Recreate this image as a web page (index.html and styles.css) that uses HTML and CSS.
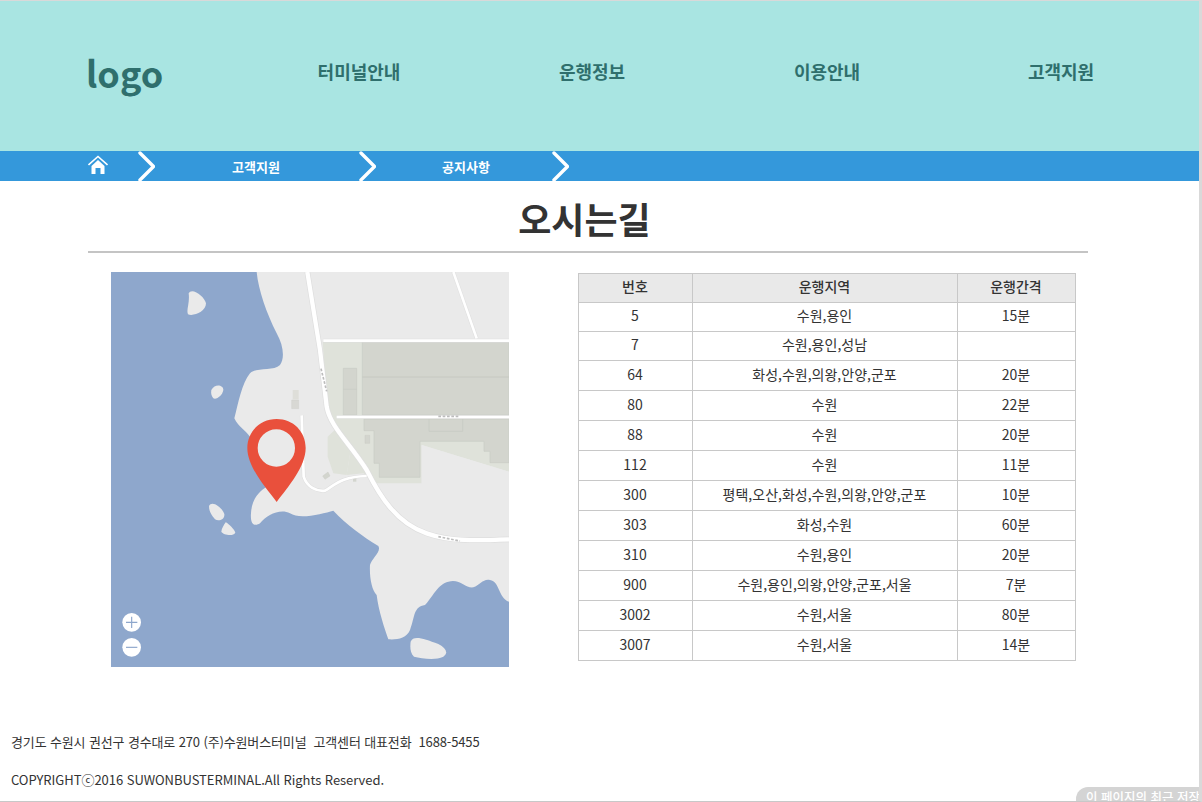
FILE: index.html
```html
<!DOCTYPE html>
<html lang="ko">
  <head>
    <meta charset="UTF-8" />
    <meta name="viewport" content="width=device-width, initial-scale=1.0" />
    <title>오시는길</title>
    <link rel="stylesheet" href="styles.css">
  </head>
  <body>
    <div class="page">
      <header class="top">
        <div class="logo">logo</div>
        <nav class="menu">
          <a>터미널안내</a>
          <a>운행정보</a>
          <a>이용안내</a>
          <a>고객지원</a>
        </nav>
      </header>

      <div class="crumbs">
        <svg class="home" width="20" height="20" viewBox="0 0 20 20">
          <path d="M0.5 10 L10 1.5 L19.5 10" fill="none" stroke="#fff" stroke-width="1.6"/>
          <path d="M3.5 11 L10 5 L16.5 11 V19 H12.5 V13 H7.5 V19 H3.5 Z" fill="#fff"/>
        </svg>
        <svg class="arrow" width="18" height="30" viewBox="0 0 18 30"><path d="M3 2 L16.5 15.5 L3 29" fill="none" stroke="#fff" stroke-width="3.4" stroke-linecap="round" stroke-linejoin="round"/></svg>
        <span class="crumb crumb-a">고객지원</span>
        <svg class="arrow" width="18" height="30" viewBox="0 0 18 30"><path d="M3 2 L16.5 15.5 L3 29" fill="none" stroke="#fff" stroke-width="3.4" stroke-linecap="round" stroke-linejoin="round"/></svg>
        <span class="crumb crumb-b">공지사항</span>
        <svg class="arrow" width="18" height="30" viewBox="0 0 18 30"><path d="M3 2 L16.5 15.5 L3 29" fill="none" stroke="#fff" stroke-width="3.4" stroke-linecap="round" stroke-linejoin="round"/></svg>
      </div>

      <h1 class="title">오시는길</h1>

      <main class="content">
        <svg class="map" width="398" height="395" viewBox="3 6 1194 1185">
          <rect x="3" y="6" width="1194" height="1185" fill="#8ea7cc"/>
          <g class="soft">
            <!-- land -->
            <path fill="#eaeaea" d="M440 6 C445 60 470 130 500 190 C520 225 525 265 510 285 C490 305 440 290 420 310 C395 340 385 400 373 445 C385 470 405 480 420 500 L470 650 C445 665 425 690 423 730 C420 765 435 770 450 760 C470 735 510 715 540 730 C570 750 640 730 670 722 C710 765 760 800 805 828 C815 845 785 865 780 885 C778 920 785 960 800 975 C805 1020 825 1080 835 1108 C860 1110 890 1105 900 1080 C915 1040 910 1010 945 1005 C965 985 985 940 1015 935 C1050 925 1065 955 1090 952 C1110 945 1120 925 1140 930 C1170 935 1165 985 1197 995 L1197 6 Z"/>
            <!-- islands -->
            <path fill="#eaeaea" d="M236 70 C245 50 285 80 288 100 C288 125 250 140 234 133 C228 120 240 100 236 70 Z"/>
            <path fill="#eaeaea" d="M304 360 C315 340 340 345 340 360 C338 375 320 390 310 385 C305 380 302 370 304 360 Z"/>
            <path fill="#eaeaea" d="M297 708 C305 690 335 710 343 732 C345 750 325 755 315 748 C305 735 297 725 297 708 Z"/>
            <path fill="#eaeaea" d="M347 757 C355 760 375 780 376 788 C370 800 340 795 334 785 C335 775 342 765 347 757 Z"/>
            <path fill="#eaeaea" d="M902 1115 C910 1095 940 1105 985 1122 C1010 1135 1015 1150 1000 1160 C975 1172 935 1165 912 1160 C900 1150 900 1130 902 1115 Z"/>
            <!-- factory area -->
            <path fill="#dfe2da" d="M638 215 H1197 V605 L935 525 V640 H800 L760 610 L710 615 L722 540 L680 475 L650 400 Z"/>
            <path fill="#dfe2da" d="M653 500 L680 475 L722 540 L710 615 L670 610 L653 560 Z"/>
            <path fill="#d3d5ce" stroke="#c9cbc4" stroke-width="2" d="M757 215 H1197 V435 H757 Z"/>
            <path fill="none" stroke="#c6c8c1" stroke-width="3" d="M757 321 H1197"/>
            <path fill="#d3d5ce" stroke="#c9cbc4" stroke-width="2" d="M700 295 H740 V435 H700 Z M700 358 H740"/>
            <path fill="#d3d5ce" stroke="#c9cbc4" stroke-width="2" d="M762 447 H1197 V578 H1140 V544 H1122 V514 H930 V622 H808 V580 H792 V482 H762 Z"/>
            <path fill="none" stroke="#c6c8c1" stroke-width="2" d="M957 447 V484 H1058 V447"/>
            <path fill="#eaeaea" d="M935 525 L1197 605 V640 H935 Z"/>
            <path fill="#d3d5ce" stroke="#c4c6bf" d="M765 496 H779 V520 H765 Z"/>
            <path fill="#d3d5ce" stroke="#c4c6bf" d="M638 618 L654 606 L660 618 L645 628 Z"/>
            <path fill="#deded9" d="M548 360 H566 V388 H548 Z"/>
            <path fill="#d8d8d4" stroke="#c8c8c4" d="M545 390 H566 V416 H545 Z"/>
            <path fill="#d3d5ce" d="M729 622 H739 V635 H729 Z"/>
            <!-- roads, casing then fill -->
            <g fill="none" stroke="#dedede" stroke-width="17">
              <path d="M592 6 L630 240 L650 410 C660 470 720 520 770 600 C810 680 860 760 950 790 C1020 815 1100 812 1197 808"/>
            </g>
            <g fill="none" stroke="#dedede" stroke-width="11">
              <path d="M640 212 H1197"/>
              <path d="M680 441 H1197"/>
              <path d="M1030 6 L1100 205"/>
              <path d="M575 436 L581 620 C590 650 620 665 645 662 C680 640 700 620 770 618"/>
            </g>
            <g fill="none" stroke="#fff" stroke-width="13">
              <path d="M592 6 L630 240 L650 410 C660 470 720 520 770 600 C810 680 860 760 950 790 C1020 815 1100 812 1197 808"/>
            </g>
            <g fill="none" stroke="#fff" stroke-width="8">
              <path d="M640 212 H1197"/>
              <path d="M680 441 H1197"/>
              <path d="M1030 6 L1100 205"/>
              <path d="M575 436 L581 620 C590 650 620 665 645 662 C680 640 700 620 770 618"/>
            </g>
            <!-- road name marks -->
            <g fill="none" stroke="#bcbcbc" stroke-width="5" stroke-dasharray="8 5">
              <path d="M633 296 L650 364"/>
              <path d="M985 439 H1050"/>
              <path d="M985 800 L1050 813"/>
            </g>
          </g>
          <!-- pin -->
          <path fill="#e9503c" fill-rule="evenodd" d="M500 447 C550 447 587 485 587 534 C587 590 535 650 500 696 C465 650 412 590 412 534 C412 485 450 447 500 447 Z M499 478 A56 56 0 1 0 499 590 A56 56 0 1 0 499 478 Z"/>
          <!-- zoom buttons -->
          <circle cx="65" cy="1057" r="28" fill="#fff"/>
          <path d="M48 1057 H82 M65 1040 V1074" stroke="#8ea7cc" stroke-width="3.5" fill="none"/>
          <circle cx="65" cy="1132" r="28" fill="#fff"/>
          <path d="M48 1132 H82" stroke="#8ea7cc" stroke-width="3.5" fill="none"/>
        </svg>

        <table class="bus">
          <thead>
            <tr><th class="c1">번호</th><th class="c2">운행지역</th><th class="c3">운행간격</th></tr>
          </thead>
          <tbody>
            <tr><td>5</td><td>수원,용인</td><td>15분</td></tr>
            <tr><td>7</td><td>수원,용인,성남</td><td></td></tr>
            <tr><td>64</td><td>화성,수원,의왕,안양,군포</td><td>20분</td></tr>
            <tr><td>80</td><td>수원</td><td>22분</td></tr>
            <tr><td>88</td><td>수원</td><td>20분</td></tr>
            <tr><td>112</td><td>수원</td><td>11분</td></tr>
            <tr><td>300</td><td>평택,오산,화성,수원,의왕,안양,군포</td><td>10분</td></tr>
            <tr><td>303</td><td>화성,수원</td><td>60분</td></tr>
            <tr><td>310</td><td>수원,용인</td><td>20분</td></tr>
            <tr><td>900</td><td>수원,용인,의왕,안양,군포,서울</td><td>7분</td></tr>
            <tr><td>3002</td><td>수원,서울</td><td>80분</td></tr>
            <tr><td>3007</td><td>수원,서울</td><td>14분</td></tr>
          </tbody>
        </table>
      </main>

      <footer class="foot">
        <p class="addr">경기도 수원시 권선구 경수대로 270 (주)수원버스터미널&nbsp; 고객센터 대표전화&nbsp; 1688-5455</p>
        <p class="copy">COPYRIGHTⓒ2016 SUWONBUSTERMINAL.All Rights Reserved.</p>
      </footer>

      <div class="saved">이 페이지의 최근 저장시</div>
    </div>
  </body>
</html>
```

FILE: styles.css
```css
html, body {
  margin: 0;
  height: 100%;
  overflow: hidden;
}
body {
  font-family: "Noto Sans CJK KR", "Noto Sans", sans-serif;
  background-color: #fff;
  color: #333;
}
.page {
  position: relative;
  box-sizing: border-box;
  height: 802px;
  overflow: hidden;
  border-top: 1px solid #d9d9d9;
  border-right: 3px solid #d9d9d9;
  border-bottom: 1px solid #c8c8c8;
}
.top {
  display: flex;
  align-items: center;
  height: 150px;
  padding-left: 86px;
  background-color: #a9e5e2;
  color: #2f6f6d;
  box-sizing: border-box;
}
.logo {
  width: 156px;
  font-size: 36px;
  font-weight: 700;
  line-height: 50px;
  margin-top: -8px;
}
.menu {
  display: grid;
  grid-template-columns: repeat(4, 234px);
  margin-top: -10px;
}
.menu a {
  text-align: center;
  font-size: 18px;
  font-weight: 700;
}
.menu a:nth-child(2) {
  padding-right: 2px;
}
.crumbs {
  display: flex;
  align-items: center;
  height: 30px;
  padding-left: 88px;
  background-color: #3498db;
  color: #fff;
}
.home {
  margin-right: 29px;
  margin-top: -2px;
}
.arrow {
  flex: none;
}
.crumb {
  text-align: center;
  font-size: 13px;
  font-weight: 700;
  box-sizing: border-box;
}
.crumb-a {
  width: 203px;
  padding-right: 1px;
}
.crumb-b {
  width: 175px;
  padding-left: 5px;
}
.title {
  width: 1000px;
  box-sizing: border-box;
  margin: 0 0 0 88px;
  padding: 9px 7px 0 0;
  height: 72px;
  border-bottom: 2px solid #c4c4c4;
  text-align: center;
  font-size: 36px;
  line-height: 56px;
  font-weight: 700;
}
.content {
  display: flex;
  align-items: flex-start;
  margin-top: 19px;
  padding-left: 111px;
}
.map {
  display: block;
  flex: none;
}
.soft {
  filter: blur(0.4px);
}
.bus {
  margin: 1px 0 0 69px;
  width: 498px;
  border-collapse: collapse;
  table-layout: fixed;
  font-size: 14px;
}
.bus th, .bus td {
  box-sizing: border-box;
  padding: 0 1px 4px 0;
  border: 1px solid #c8c8c8;
  text-align: center;
  font-weight: 400;
  height: 30px;
  line-height: 20px;
}
.bus th {
  height: 29px;
  background-color: #e9e9e9;
  font-weight: 500;
}
.bus tbody tr:nth-child(-n+2) td {
  height: 29px;
}
.c1 { width: 114px; }
.c2 { width: 265px; }
.c3 { width: 118px; }
.foot {
  margin-top: 65px;
  padding-left: 11px;
  font-size: 13px;
  color: #333;
}
.foot p {
  margin: 0 0 18px;
  line-height: 20px;
}
.addr {
  letter-spacing: -0.14px;
}
.copy {
  letter-spacing: -0.04px;
}
.saved {
  position: absolute;
  right: 0;
  bottom: -1px;
  width: 123px;
  height: 15px;
  overflow: hidden;
  white-space: nowrap;
  padding-left: 10px;
  box-sizing: border-box;
  border-radius: 12px 0 0 0;
  background-color: #d4d4d4;
  color: #fff;
  font-size: 12.5px;
  font-weight: 500;
  line-height: 20px;
}
```
